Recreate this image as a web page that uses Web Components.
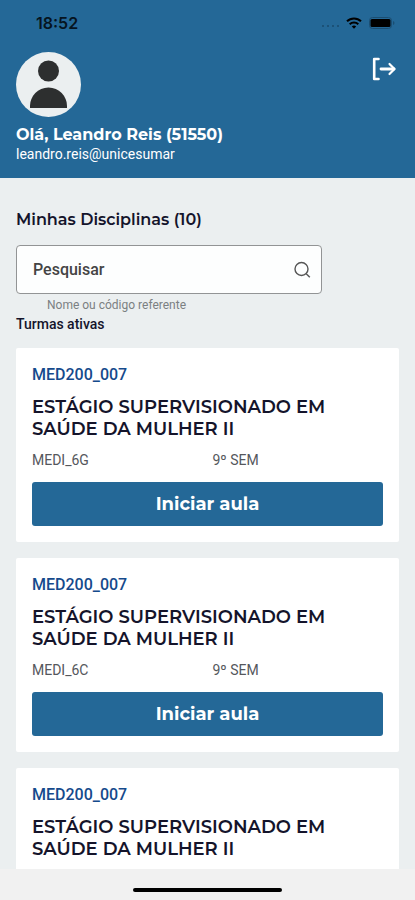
<!DOCTYPE html>
<html lang="pt-BR">
<head>
<meta charset="UTF-8">
<meta name="viewport" content="width=device-width, initial-scale=1.0">
<title>Minhas Disciplinas</title>
<style>
    :root {
        --azul: #246897;
        --fundo: #ebeff0;
        --texto: #14142b;
        --titulo: Montserrat, Inter, sans-serif;
    }
    body {
        margin: 0;
        font-family: Roboto, sans-serif;
        color: var(--texto);
        background: var(--fundo);
    }
</style>
</head>
<body>
<app-tela>
    <app-topo slot="topo" hora="18:52">
        <span slot="nome">Olá, Leandro Reis (51550)</span>
        <span slot="email">leandro.reis@unicesumar</span>
    </app-topo>
    <h1 slot="titulo">Minhas Disciplinas (10)</h1>
    <campo-busca slot="busca" texto="Pesquisar">Nome ou código referente</campo-busca>
    <h2 slot="subtitulo">Turmas ativas</h2>
    <card-turma codigo="MED200_007" turma="MEDI_6G" serie="9º SEM">ESTÁGIO SUPERVISIONADO EM SAÚDE DA MULHER II</card-turma>
    <card-turma codigo="MED200_007" turma="MEDI_6C" serie="9º SEM">ESTÁGIO SUPERVISIONADO EM SAÚDE DA MULHER II</card-turma>
    <card-turma codigo="MED200_007">ESTÁGIO SUPERVISIONADO EM SAÚDE DA MULHER II</card-turma>
</app-tela>

<script>
class AppTela extends HTMLElement {
    constructor() {
        super();
        this.attachShadow({ mode: 'open' });
    }

    getStyles() {
        return `
        <style>
        :host {
            display: flex;
            flex-direction: column;
            height: 100vh;
        }
        main {
            flex: 1;
            min-height: 0;
            overflow: hidden;
            padding: 31px 16px 0;
        }
        ::slotted(h1) {
            margin: 0 0 14px;
            font: 600 16px/22px var(--titulo);
        }
        ::slotted(h2) {
            margin: 0 0 14px;
            font-size: 14px;
            font-weight: 500;
            line-height: 20px;
        }
        .lista {
            display: flex;
            flex-direction: column;
            gap: 16px;
        }
        footer {
            display: flex;
            justify-content: center;
            padding: 19px 0 8px;
            background: #f1f1f1;
        }
        .barra {
            width: 36%;
            height: 4px;
            border-radius: 2px;
            background: #000;
        }
        </style>
        `;
    }

    connectedCallback() {
        this.shadowRoot.innerHTML = `
        ${this.getStyles()}
        <slot name="topo"></slot>
        <main>
            <slot name="titulo"></slot>
            <slot name="busca"></slot>
            <slot name="subtitulo"></slot>
            <div class="lista"><slot></slot></div>
        </main>
        <footer><div class="barra"></div></footer>
        `;
    }
}

class AppTopo extends HTMLElement {
    constructor() {
        super();
        this.attachShadow({ mode: 'open' });
    }

    getStyles() {
        return `
        <style>
        :host {
            display: block;
            padding: 12px 16px 15px;
            background: var(--azul);
            color: #fff;
        }
        svg {
            display: block;
        }
        .status {
            display: flex;
            align-items: center;
            justify-content: space-between;
            padding: 0 4px 0 20px;
            margin-bottom: 18px;
            color: #06141f;
            font: 600 16px/22px Inter, sans-serif;
        }
        .sinais {
            display: flex;
            align-items: center;
            gap: 7px;
        }
        .linha {
            display: flex;
            align-items: flex-start;
            justify-content: space-between;
            margin-bottom: 8px;
        }
        button {
            padding: 4px 2px;
            border: 0;
            background: none;
            color: inherit;
            cursor: pointer;
        }
        .nome {
            font: 700 16px/20px var(--titulo);
        }
        .email {
            font-size: 14px;
            line-height: 18px;
        }
        </style>
        `;
    }

    connectedCallback() {
        this.shadowRoot.innerHTML = `
        ${this.getStyles()}
        <div class="status">
            <span>${this.getAttribute('hora')}</span>
            <div class="sinais">
                <svg width="18" height="10" viewBox="0 0 18 10" fill="#184a6c">
                    <circle cx="2" cy="8" r="1"/><circle cx="7" cy="8" r="1"/>
                    <circle cx="12" cy="8" r="1"/><circle cx="17" cy="8" r="1"/>
                </svg>
                <svg width="16" height="12" viewBox="0 0 16 12" fill="none" stroke="#000" stroke-width="2">
                    <path d="M1 4.3a10 10 0 0 1 14 0"/>
                    <path d="M3.7 7.2a6.1 6.1 0 0 1 8.6 0"/>
                    <path d="M8 11.8 5.8 9.6a3.1 3.1 0 0 1 4.4 0z" fill="#000" stroke="none"/>
                </svg>
                <svg width="26" height="12" viewBox="0 0 26 12">
                    <rect x=".5" y=".5" width="22" height="11" rx="3" fill="none" stroke="#1b4e72"/>
                    <rect x="1.500" y="2" width="20" height="8" rx="1.500"/>
                    <path d="M24 4v4c2-.7 2-3.300 0-4z" fill="#1b4e72"/>
                </svg>
            </div>
        </div>
        <div class="linha">
            <svg width="65" height="65" viewBox="0 0 65 65">
                <circle cx="32.500" cy="32.500" r="32.500" fill="#ebeff0"/>
                <circle cx="32.500" cy="19" r="10.500" fill="#2d2f2f"/>
                <path d="M14 56v-2c0-10 8-18.500 18.500-18.500S51 44 51 54v2z" fill="#2d2f2f"/>
            </svg>
            <button type="button" aria-label="Sair">
                <svg width="26" height="26" viewBox="0 0 26 26" fill="none" stroke="currentColor" stroke-linecap="round" stroke-linejoin="round">
                    <path d="M7.500 3H3.200v20h4.300" stroke-width="2.600"/>
                    <path d="M10 13h13" stroke-width="2.800"/>
                    <path d="m18.500 8 5 5-5 5" stroke-width="2.200"/>
                </svg>
            </button>
        </div>
        <div class="nome"><slot name="nome"></slot></div>
        <div class="email"><slot name="email"></slot></div>
        `;
    }
}

class CampoBusca extends HTMLElement {
    constructor() {
        super();
        this.attachShadow({ mode: 'open' });
    }

    getStyles() {
        return `
        <style>
        :host {
            display: block;
        }
        label {
            display: flex;
            align-items: center;
            box-sizing: border-box;
            width: 80%;
            height: 49px;
            padding: 0 10px 0 16px;
            border: 1px solid #929495;
            border-radius: 4px;
            background: #fdfefe;
        }
        input {
            flex: 1;
            min-width: 0;
            padding: 0;
            border: 0;
            outline: 0;
            background: none;
            color: #444;
            font: 500 16px/22px Roboto, sans-serif;
        }
        input::placeholder {
            color: #444;
            opacity: 1;
        }
        p {
            margin: 2px 0 0 31px;
            color: #7b8082;
            font-size: 12px;
            line-height: 18px;
        }
        </style>
        `;
    }

    connectedCallback() {
        const texto = this.getAttribute('texto');
        this.shadowRoot.innerHTML = `
        ${this.getStyles()}
        <label for="busca">
            <input id="busca" type="text" placeholder="${texto}" aria-label="${texto}" aria-describedby="ajuda">
            <svg width="18" height="18" viewBox="0 0 18 18" fill="none" stroke="#555" stroke-width="1.400">
                <circle cx="8.500" cy="8" r="6.500"/>
                <path d="m13.200 12.700 3.600 3.600"/>
            </svg>
        </label>
        <p id="ajuda"><slot></slot></p>
        `;
    }
}

class CardTurma extends HTMLElement {
    constructor() {
        super();
        this.attachShadow({ mode: 'open' });
    }

    getStyles() {
        return `
        <style>
        :host {
            display: block;
            padding: 16px;
            border-radius: 2px;
            background: #fff;
        }
        .codigo {
            color: #154a8c;
            font-size: 16px;
            font-weight: 500;
            line-height: 22px;
        }
        h3 {
            margin: 10px 0;
            font: 600 18px/22px var(--titulo);
        }
        .dados {
            display: grid;
            grid-template-columns: 1fr 1fr;
            column-gap: 10px;
            margin-bottom: 12px;
            color: #55575c;
            font-size: 14px;
            line-height: 20px;
        }
        button {
            display: block;
            width: 100%;
            height: 44px;
            border: 0;
            border-radius: 3px;
            background: var(--azul);
            color: #fff;
            font: 700 18px/22px var(--titulo);
            cursor: pointer;
        }
        </style>
        `;
    }

    getDados() {
        if (!this.hasAttribute('turma')) return '';
        return `
        <div class="dados">
            <span>${this.getAttribute('turma')}</span>
            <span>${this.getAttribute('serie')}</span>
        </div>
        <button type="button">Iniciar aula</button>
        `;
    }

    connectedCallback() {
        this.shadowRoot.innerHTML = `
        ${this.getStyles()}
        <div class="codigo">${this.getAttribute('codigo')}</div>
        <h3><slot></slot></h3>
        ${this.getDados()}
        `;
    }
}

customElements.define('app-tela', AppTela);
customElements.define('app-topo', AppTopo);
customElements.define('campo-busca', CampoBusca);
customElements.define('card-turma', CardTurma);
</script>
</body>
</html>
